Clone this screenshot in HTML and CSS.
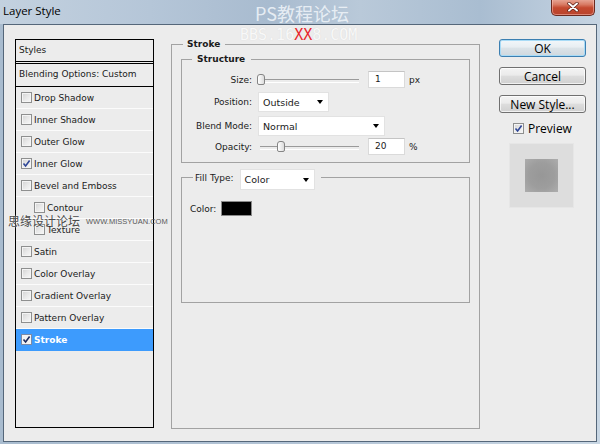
FILE: index.html
```html
<!DOCTYPE html>
<html>
<head>
<meta charset="utf-8">
<title>Layer Style</title>
<link rel="stylesheet" href="styles.css">
</head>
<body>
<div class="window">
  <div class="titlebar">
    <span class="title">Layer Style</span>
    <button class="close" type="button" aria-label="Close">
      <svg width="12" height="10" viewBox="0 0 12 10"><path d="M2 1.5L10 8.5M10 1.5L2 8.5" stroke="#5a1d14" stroke-width="3.4" stroke-linecap="round"/><path d="M2 1.5L10 8.5M10 1.5L2 8.5" stroke="#fff" stroke-width="1.9" stroke-linecap="round"/></svg>
    </button>
  </div>
  <div class="client">
    <div class="list">
      <div class="list-head">Styles</div>
      <div class="list-blend">Blending Options: Custom</div>
      <div class="row"><span class="cb"></span>Drop Shadow</div>
      <div class="row"><span class="cb"></span>Inner Shadow</div>
      <div class="row"><span class="cb"></span>Outer Glow</div>
      <div class="row"><span class="cb checked"><svg width="9" height="9" viewBox="0 0 9 9"><path d="M1.5 4.5L3.6 7L7.6 1.6" fill="none" stroke="#2e4697" stroke-width="1.6"/></svg></span>Inner Glow</div>
      <div class="row"><span class="cb"></span>Bevel and Emboss</div>
      <div class="row sub"><span class="cb"></span>Contour</div>
      <div class="row sub"><span class="cb"></span>Texture</div>
      <div class="row"><span class="cb"></span>Satin</div>
      <div class="row"><span class="cb"></span>Color Overlay</div>
      <div class="row"><span class="cb"></span>Gradient Overlay</div>
      <div class="row"><span class="cb"></span>Pattern Overlay</div>
      <div class="row selected"><span class="cb checked"><svg width="9" height="9" viewBox="0 0 9 9"><path d="M1.5 4.5L3.6 7L7.6 1.6" fill="none" stroke="#1f2c5c" stroke-width="1.6"/></svg></span>Stroke</div>
    </div>

    <div class="main">
      <fieldset class="group outer">
        <legend class="bold-legend">Stroke</legend>
        <fieldset class="group structure">
          <legend class="bold-legend">Structure</legend>
          <div class="frow r-size">
            <label>Size:</label>
            <div class="slider"><span class="thumb"></span></div>
            <span class="num">1</span>
            <span class="unit">px</span>
          </div>
          <div class="frow r-pos">
            <label>Position:</label>
            <div class="select w-pos"><span>Outside</span><i class="arrow"></i></div>
          </div>
          <div class="frow r-blend">
            <label>Blend Mode:</label>
            <div class="select w-blend"><span>Normal</span><i class="arrow"></i></div>
          </div>
          <div class="frow r-op">
            <label>Opacity:</label>
            <div class="slider"><span class="thumb" style="left:20px"></span></div>
            <span class="num">20</span>
            <span class="unit">%</span>
          </div>
        </fieldset>
        <fieldset class="group fill">
          <legend class="fill-legend"><span class="ft-label">Fill Type:</span><div class="select w-fill"><span>Color</span><i class="arrow"></i></div></legend>
          <div class="color-row"><span>Color:</span><span class="swatch"></span></div>
        </fieldset>
      </fieldset>
    </div>

    <div class="side">
      <button class="btn ok" type="button">OK</button>
      <button class="btn" type="button">Cancel</button>
      <button class="btn" type="button">New Style...</button>
      <div class="preview-row"><span class="cb checked"><svg width="9" height="9" viewBox="0 0 9 9"><path d="M1.5 4.5L3.6 7L7.6 1.6" fill="none" stroke="#2e4697" stroke-width="1.6"/></svg></span>Preview</div>
      <div class="preview-box"><div class="preview-square"></div></div>
    </div>
  </div>

  <div class="wm wm-title">PS教程论坛</div>
  <div class="wm wm-bbs">BBS.16<span class="red">XX</span>8.COM</div>
  <div class="wm wm-miss"><span class="cn">思缘设计论坛</span><span class="url">WWW.MISSYUAN.COM</span></div>
</div>
</body>
</html>
```

FILE: styles.css
```css
* { box-sizing: border-box; }
html, body { margin: 0; padding: 0; }
body {
  width: 600px;
  height: 444px;
  overflow: hidden;
  font-family: "DejaVu Sans", sans-serif;
  font-size: 9px;
  color: #1a1a1a;
}

.window {
  position: relative;
  width: 600px;
  height: 444px;
  display: flex;
  flex-direction: column;
  background: linear-gradient(90deg, #a9bccf 0%, #b3c4d6 50%, #c9d7e4 100%);
}

.titlebar {
  height: 24px;
  flex: none;
  display: flex;
  align-items: flex-start;
  padding-left: 3px;
  background: linear-gradient(90deg, #c3d1df 0%, #b5c6d8 25%, #a8bbcf 45%, #b9c9d9 60%, #a9bdd1 80%, #c6d4e2 100%);
}
.title {
  font-family: "Open Sans", "Liberation Sans", sans-serif;
  font-size: 11.5px;
  line-height: 21px;
  color: #000;
}
.close {
  margin-left: auto;
  margin-right: 5px;
  margin-top: -1px;
  width: 44px;
  height: 17px;
  padding: 0;
  border: 1px solid #6b2a1f;
  border-top: none;
  border-radius: 0 0 5px 5px;
  background: linear-gradient(#e9ab9b 0%, #d87a63 35%, #c4492f 55%, #b8432c 100%);
  display: flex;
  align-items: center;
  justify-content: center;
  box-shadow: inset 0 0 0 1px rgba(255, 200, 190, 0.5);
}

.client {
  flex: 1;
  margin: 0 3px 2px;
  border: 1px solid #55677a;
  background: #ececec;
  display: flex;
  align-items: flex-start;
  padding: 14px 0 0 11px;
}

/* left styles list */
.list {
  flex: none;
  width: 139px;
  height: 389px;
  border: 1px solid #000;
  background: #ececec;
}
.list-head {
  height: 22px;
  line-height: 21px;
  border-bottom: 1px solid #000;
  padding-left: 3px;
  margin-bottom: 1px;
}
.list-blend {
  height: 24px;
  line-height: 21px;
  border-top: 1px solid #000;
  border-bottom: 1px solid #000;
  padding-left: 3px;
}
.row {
  height: 22px;
  border-bottom: 1px solid #fbfbfb;
  display: flex;
  align-items: center;
  padding-left: 5px;
}
.row.sub { padding-left: 18px; }
.row.selected {
  background: #3d9bfd;
  color: #fff;
  font-weight: bold;
  border-bottom-color: #3d9bfd;
}
.cb {
  flex: none;
  width: 11px;
  height: 11px;
  margin-right: 2px;
  border: 1px solid #8e8f8f;
  background: linear-gradient(135deg, #d2d2d2 0%, #e8e8e8 50%, #f8f8f8 100%);
  box-shadow: inset 0 0 0 1px #f4f4f4;
  display: flex;
  align-items: center;
  justify-content: center;
}
.row.selected .cb { background: #f2f2f2; border-color: #7c8aa5; }

/* middle panel */
.main {
  flex: none;
  margin-left: 17px;
  margin-top: -1px;
  width: 309px;
}
fieldset.group {
  margin: 0;
  padding: 0;
  min-width: 0;
  border: 1px solid #a2a2a2;
}
fieldset.outer { width: 309px; height: 391px; }
.bold-legend {
  font-weight: bold;
  height: 13px;
  line-height: 13px;
  padding: 0 5px 0 4px;
  margin-left: 11px;
}
fieldset.structure {
  margin: 2px 9px 0;
  height: 110px;
  padding-top: 5px;
}
.structure .bold-legend { margin-left: 10px; padding: 0 6px 0 5px; }

.frow {
  display: flex;
  align-items: center;
  height: 17px;
}
.frow label {
  flex: none;
  width: 70px;
  text-align: right;
  margin-right: 6px;
}
.r-pos { margin-top: 4px; height: 20px; }
.r-blend { margin-top: 4px; height: 20px; }
.r-op { margin-top: 2px; }

.slider {
  position: relative;
  flex: none;
  width: 103px;
  height: 12px;
  margin-left: -1px;
}
.slider::before {
  content: "";
  position: absolute;
  left: 3px;
  right: 1px;
  top: 5px;
  height: 2px;
  border-top: 1px solid #9a9a9a;
  border-bottom: 1px solid #fff;
}
.thumb {
  position: absolute;
  left: 0;
  top: 0;
  width: 8px;
  height: 11px;
  border: 1px solid #858585;
  border-radius: 3px 3px 2px 2px;
  background: linear-gradient(90deg, #ffffff, #dcdcdc);
}
.num {
  flex: none;
  margin-left: 8px;
  width: 37px;
  height: 17px;
  line-height: 15px;
  padding-left: 6px;
  background: #fff;
  border: 1px solid #dadada;
  border-top-color: #c4c4c4;
}
.unit { margin-left: 4px; }

.select {
  flex: none;
  height: 20px;
  display: flex;
  align-items: center;
  padding: 0 5px 0 4px;
  background: #fff;
  border: 1px solid #e2e2e2;
  font-size: 9.5px;
}
.select .arrow {
  margin-left: auto;
  width: 0;
  height: 0;
  border-left: 3.5px solid transparent;
  border-right: 3.5px solid transparent;
  border-top: 4px solid #000;
}
.w-pos { width: 71px; }
.w-blend { width: 127px; }
.w-fill { width: 75px; height: 21px; margin-left: 6px; }

fieldset.fill {
  margin: 6px 9px 0;
  height: 134px;
}
.fill-legend {
  display: flex;
  align-items: flex-start;
  height: 17px;
  line-height: 17px;
  padding: 0 6px 0 2px;
  margin-left: 11px;
}
.ft-label { line-height: 18px; }
.color-row {
  display: flex;
  align-items: center;
  height: 15px;
  margin-top: 15px;
  padding-left: 8px;
}
.swatch {
  width: 31px;
  height: 15px;
  margin-left: 5px;
  background: #000;
  border: 1px solid #8a8a8a;
}

/* right column */
.side {
  flex: none;
  margin-left: 19px;
  width: 87px;
  display: flex;
  flex-direction: column;
}
.btn {
  height: 18px;
  margin: 0 0 10px;
  padding: 0;
  border: 1px solid #707070;
  border-radius: 3px;
  background: linear-gradient(#f3f3f3 0%, #ebebeb 45%, #dddddd 50%, #d0d0d0 100%);
  box-shadow: inset 0 0 0 1px rgba(255, 255, 255, 0.7);
  font-family: "Open Sans", "Liberation Sans", sans-serif;
  font-size: 12px;
  line-height: 15px;
  color: #000;
}
.btn.ok {
  border-color: #3c7fb1;
  box-shadow: inset 0 0 0 1px #a8dbf6;
  background: linear-gradient(#f2f7fa 0%, #e8eef2 45%, #dbe3e8 50%, #cfd8de 100%);
}
.preview-row {
  display: flex;
  align-items: center;
  height: 11px;
  padding-left: 14px;
  font-family: "Open Sans", "Liberation Sans", sans-serif;
  font-size: 12px;
  color: #000;
}
.preview-row .cb { margin-right: 4px; }
.preview-box {
  margin: 9px 0 0 10px;
  width: 65px;
  height: 65px;
  background: #dddddd;
  border: 1px solid #e6e6e6;
  display: flex;
  align-items: center;
  justify-content: center;
}
.preview-square {
  width: 33px;
  height: 33px;
  background: radial-gradient(circle, #979797 0%, #9d9d9d 55%, #adadad 100%);
}

/* watermark overlays */
.wm { position: absolute; white-space: nowrap; }
.wm-title {
  left: 255px;
  top: 2px;
  font-family: "Noto Sans CJK SC", "DejaVu Sans", sans-serif;
  font-size: 18px;
  line-height: 22px;
  color: rgba(238, 243, 248, 0.9);
}
.wm-bbs {
  left: 240px;
  top: 28px;
  font-family: "DejaVu Sans Mono", monospace;
  font-size: 15px;
  line-height: 15px;
  color: #f8f8f8;
  text-shadow: 0 0 1px #d6d6d6;
}
.wm-bbs .red { color: #e8262c; text-shadow: none; }
.wm-miss {
  left: 8px;
  top: 213px;
  display: flex;
  align-items: center;
}
.wm-miss .cn {
  font-family: "Noto Sans CJK SC", sans-serif;
  font-size: 12px;
  line-height: 16px;
  color: #4a4a4a;
  text-shadow: 0 0 2px #fff;
}
.wm-miss .url {
  margin-left: 6px;
  font-family: "Liberation Sans", sans-serif;
  font-size: 7.5px;
  color: #5a5a5a;
}
```
